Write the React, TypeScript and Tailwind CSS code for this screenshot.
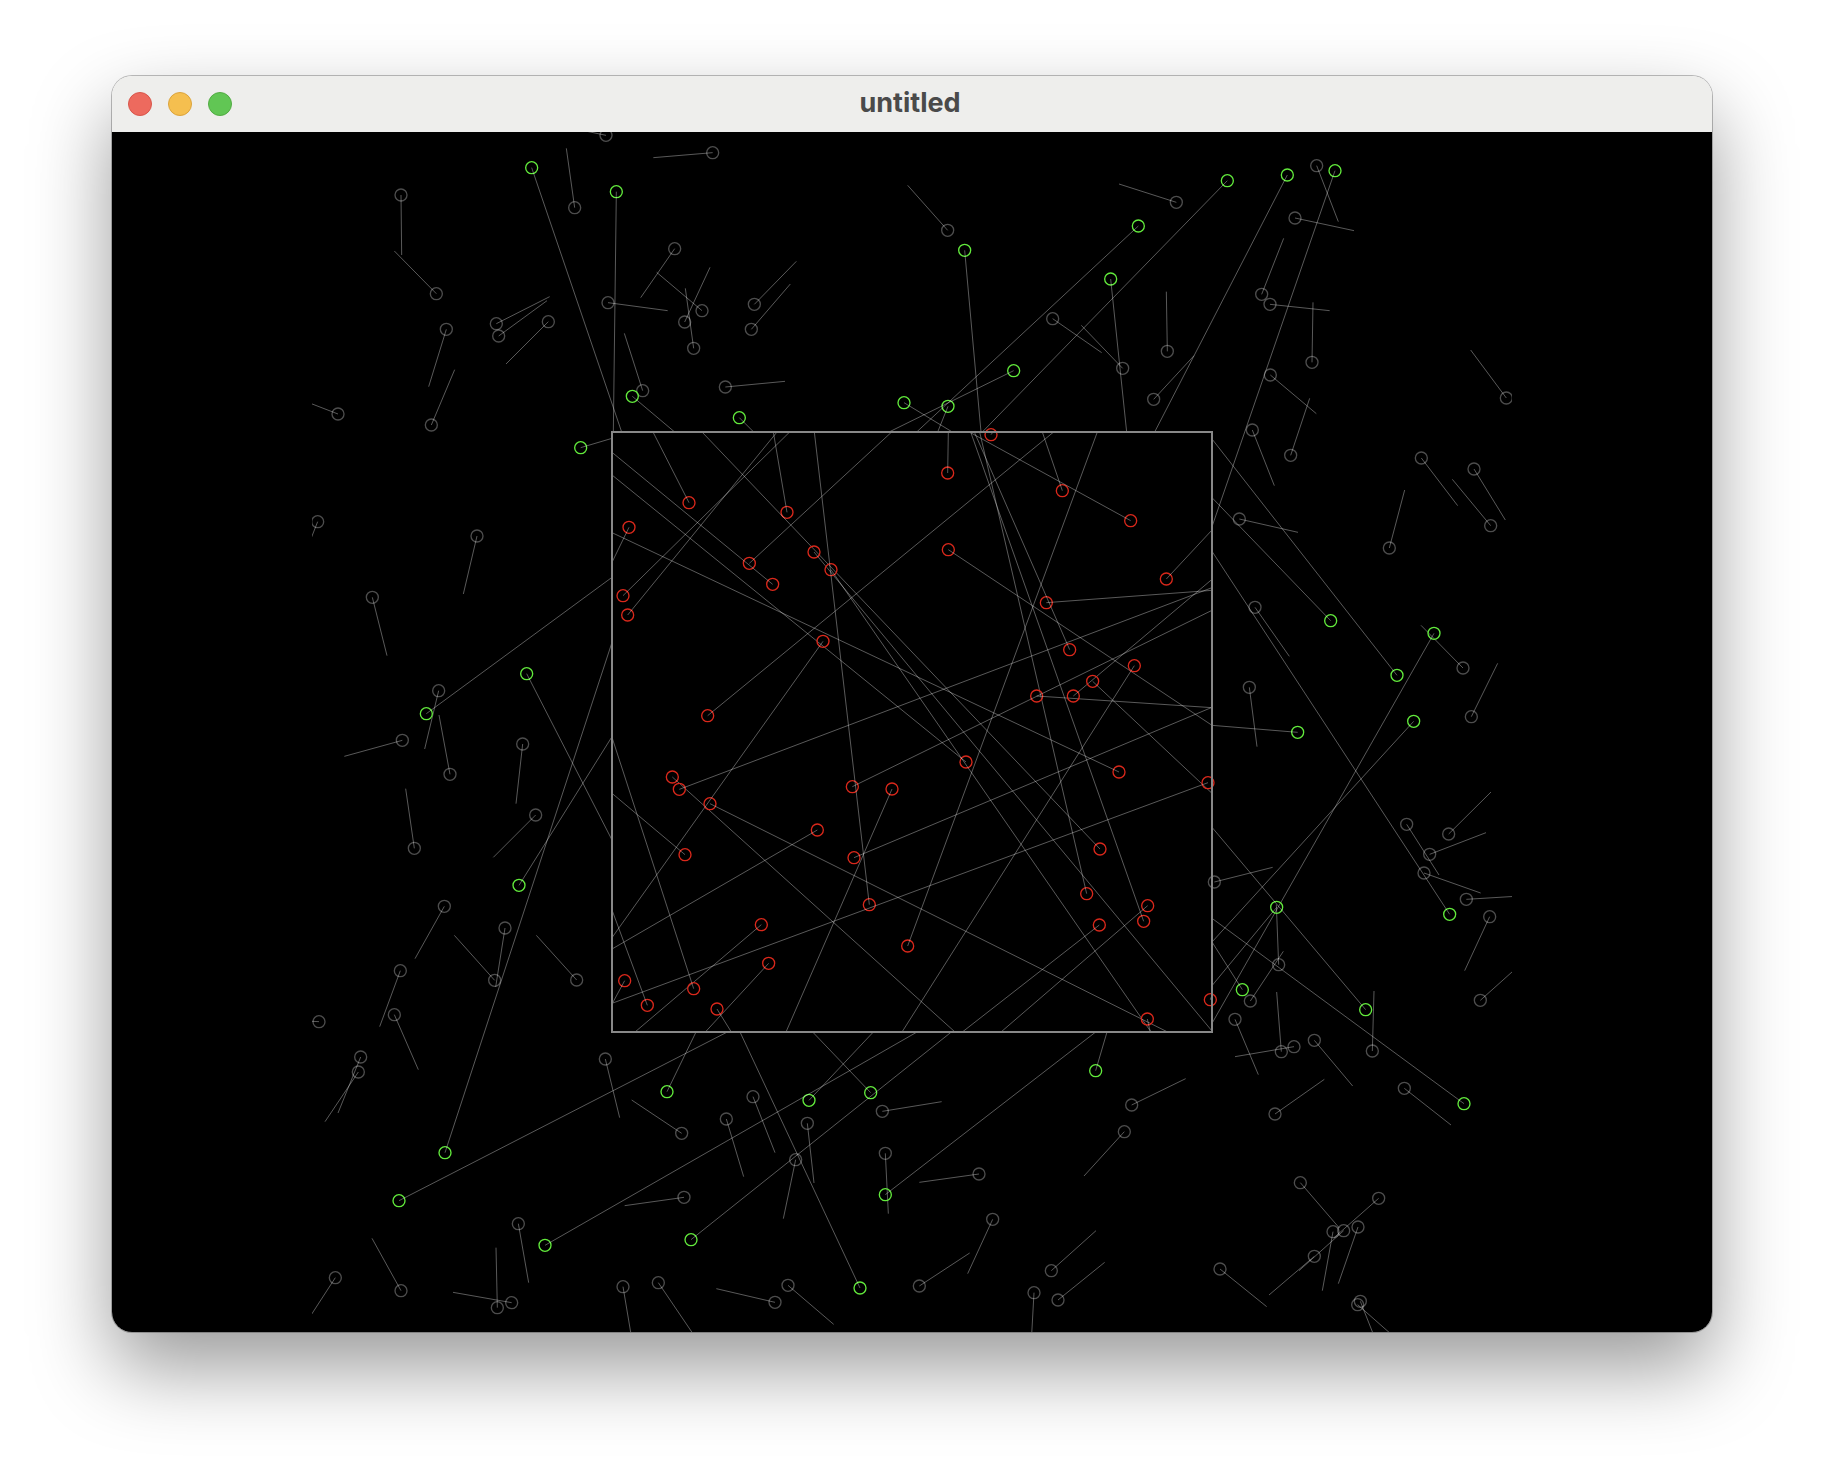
type Ray = [cx: number, cy: number, ex: number, ey: number];

const idle: Ray[] = [
  [882, 10, 706, -27], [1202, 62, 1024, 77], [788, 227, 763, 49], [267, 189, 269, 369],
  [373, 485, 247, 357], [403, 592, 350, 764], [358, 879, 428, 713], [553, 575, 713, 494],
  [560, 612, 705, 506], [709, 569, 582, 696], [78, 846, -90, 781], [17, 1169, -49, 1337],
  [1088, 350, 986, 497], [1170, 536, 1034, 421], [888, 512, 1067, 536], [1118, 570, 1194, 406],
  [1145, 649, 1120, 469], [992, 776, 937, 604], [495, 1212, 454, 1386], [1907, 295, 1787, 160],
  [1327, 517, 1453, 388], [1318, 592, 1435, 456], [1240, 765, 1419, 748], [2222, 560, 2369, 662],
  [2432, 709, 2308, 580], [2593, 211, 2421, 156], [3014, 101, 3079, 269], [2949, 258, 3126, 296],
  [2849, 487, 2915, 319], [2874, 517, 3053, 536], [2566, 658, 2563, 479], [3000, 691, 3003, 511],
  [2525, 802, 2646, 671], [2875, 729, 3013, 845], [2821, 894, 2887, 1061], [2936, 970, 2993, 799],
  [3583, 798, 3476, 654], [3328, 978, 3437, 1121], [3486, 1011, 3580, 1164], [3536, 1181, 3421, 1042],
  [2782, 1161, 2958, 1201], [3232, 1248, 3278, 1074], [2829, 1426, 2932, 1573], [2812, 1666, 2835, 1844],
  [3453, 1608, 3327, 1480], [3478, 1754, 3557, 1594], [3284, 2077, 3381, 2229], [3410, 2106, 3537, 1980],
  [3353, 2167, 3522, 2102], [3336, 2223, 3506, 2283], [3463, 2302, 3643, 2291], [3533, 2354, 3458, 2516],
  [2707, 2250, 2882, 2206], [181, 1396, 225, 1571], [380, 1676, 338, 1851], [271, 1825, 97, 1873],
  [414, 1927, 381, 1749], [632, 1836, 612, 2015], [671, 2049, 544, 2176], [307, 2149, 281, 1970],
  [397, 2323, 309, 2480], [579, 2388, 551, 2565], [548, 2545, 427, 2410], [794, 2544, 673, 2410],
  [265, 2516, 203, 2684], [21, 2669, -150, 2660], [247, 2648, 319, 2813], [146, 2775, 78, 2943],
  [139, 2820, 39, 2969], [880, 2781, 923, 2957], [1109, 3004, 959, 2904], [1116, 3196, 938, 3221],
  [619, 3275, 650, 3452], [70, 3437, -28, 3588], [267, 3476, 180, 3319], [556, 3527, 552, 3347],
  [599, 3512, 423, 3481], [933, 3464, 963, 3642], [1039, 3452, 1140, 3601], [1243, 2961, 1295, 3134],
  [1323, 2894, 1389, 3062], [1486, 2974, 1506, 3153], [1451, 3083, 1414, 3260], [1711, 2938, 1889, 2909],
  [1720, 3064, 1729, 3245], [2001, 3126, 1822, 3151], [2042, 3262, 1967, 3425], [1822, 3462, 1973, 3363],
  [1428, 3460, 1565, 3577], [1389, 3511, 1213, 3470], [2218, 3416, 2352, 3296], [2238, 3504, 2378, 3391],
  [2166, 3482, 2156, 3662], [2437, 2999, 2316, 3132], [2459, 2919, 2621, 2840], [2900, 2498, 2893, 2318],
  [2815, 2607, 2914, 2458], [2769, 2662, 2839, 2828], [2908, 2759, 2894, 2580], [2946, 2744, 2769, 2774],
  [3007, 2725, 3122, 2862], [3181, 2757, 3186, 2577], [3277, 2869, 3417, 2979], [2889, 2946, 3037, 2842],
  [3505, 2605, 3639, 2485], [2965, 3152, 3082, 3288], [3200, 3199, 3065, 3318], [3063, 3299, 3031, 3476],
  [3095, 3296, 2961, 3416], [3138, 3285, 3079, 3455], [3007, 3373, 2871, 3489], [2724, 3411, 2864, 3524],
  [3145, 3508, 3211, 3675], [3137, 3518, 3272, 3637],
];

const outside: Ray[] = [
  [659, 107, 929, 900], [913, 179, 904, 900], [961, 793, 1088, 900], [806, 947, 900, 919],
  [1958, 355, 2007, 900], [1282, 857, 1325, 900], [1776, 812, 1921, 900], [1908, 823, 1877, 900],
  [2105, 716, 1731, 900], [2479, 282, 1814, 900], [2746, 146, 2011, 900], [2396, 441, 2444, 900],
  [2926, 129, 2528, 900], [3069, 116, 2700, 1184], [3056, 1466, 2700, 1097], [3255, 1630, 2700, 921],
  [3366, 1504, 2700, 2674], [3305, 1768, 2700, 2430], [2957, 1801, 2700, 1780], [3413, 2347, 2700, 1258],
  [2894, 2326, 2700, 2561], [3161, 2633, 2700, 2086], [2791, 2573, 2700, 2430], [3456, 2915, 2700, 2359],
  [2351, 2816, 2385, 2700], [1720, 3188, 2351, 2700], [1676, 2882, 1502, 2700], [1491, 2905, 1684, 2700],
  [1644, 3468, 1284, 2700], [1137, 3323, 1918, 2700], [699, 3340, 1815, 2700], [1065, 2879, 1152, 2700],
  [261, 3206, 1246, 2700], [399, 3062, 900, 1531], [343, 1745, 900, 1336], [644, 1625, 900, 2124],
  [621, 2260, 900, 1814],
];

const inside: Ray[] = [
  [1131, 1112, 1023, 900], [951, 1186, 900, 1291], [1425, 1141, 1384, 900], [1907, 1023, 1909, 900],
  [2037, 908, 2043, 900], [2251, 1076, 2191, 900], [2456, 1166, 1972, 900], [933, 1391, 1433, 900],
  [947, 1449, 1395, 900], [1081, 1935, 1929, 2700], [1102, 1972, 2700, 1367], [1119, 2168, 900, 1984],
  [1187, 1751, 2225, 900], [1194, 2015, 2567, 2700], [1312, 1294, 1739, 900], [1382, 1357, 900, 961],
  [1962, 1890, 900, 1029], [2364, 2151, 1170, 900], [1506, 1260, 2700, 2697], [1557, 1313, 2517, 2700],
  [1909, 1253, 2700, 1780], [2203, 1412, 2700, 1375], [2273, 1553, 1987, 900], [2495, 2368, 1976, 900],
  [2324, 2285, 2003, 900], [2174, 1692, 2700, 1727], [2284, 1692, 2700, 1342], [2342, 1648, 2700, 1984],
  [1533, 1528, 900, 2417], [1621, 1964, 2700, 1435], [1740, 1971, 1422, 2700], [1516, 2094, 900, 2451],
  [1626, 2177, 2700, 1726], [1672, 2318, 1507, 900], [1348, 2378, 969, 2700], [2563, 1341, 2700, 1194],
  [2467, 1601, 1770, 2700], [2421, 1920, 900, 1202], [2688, 1952, 900, 2614], [2507, 2321, 2067, 2700],
  [2362, 2379, 1951, 2700], [938, 2546, 900, 2616], [1006, 2620, 900, 2334], [1145, 2570, 900, 1816],
  [1370, 2494, 1180, 2700], [1215, 2631, 1258, 2700], [1787, 2442, 2356, 900], [2695, 2603, 2700, 2590],
  [2506, 2661, 2515, 2700],
];

function Rays({ rays, circle }: { rays: Ray[]; circle: string }) {
  return (
    <g>
      {rays.map(([cx, cy, ex, ey], i) => (
        <g key={i}>
          <circle cx={cx} cy={cy} r={18} strokeWidth={4} className={circle} />
          <line x1={cx} y1={cy} x2={ex} y2={ey} className="stroke-white/35" />
        </g>
      ))}
    </g>
  );
}

function Scene() {
  return (
    <svg
      viewBox="0 0 3600 3600"
      className="block aspect-square w-3/4 overflow-hidden"
      fill="none"
      strokeWidth={3}
      role="img"
      aria-label="Particle rays around a box"
    >
      <Rays rays={idle} circle="stroke-white/30" />
      <Rays rays={outside} circle="stroke-[#62ea3c]" />
      <Rays rays={inside} circle="stroke-[#da281b]" />
      <rect x={900} y={900} width={1800} height={1800} strokeWidth={6} className="stroke-[#888888]" />
    </svg>
  );
}

function TitleBar() {
  return (
    <header className="grid h-14 grid-cols-[1fr_auto_1fr] items-center bg-[#eeeeec] px-4">
      <div className="flex gap-4">
        <button type="button" aria-label="Close" className="size-6 rounded-full border border-[#d8564b] bg-[#ed6a5e]" />
        <button type="button" aria-label="Minimize" className="size-6 rounded-full border border-[#dba33c] bg-[#f5bf4f]" />
        <button type="button" aria-label="Zoom" className="size-6 rounded-full border border-[#52ab43] bg-[#61c654]" />
      </div>
      <h1 className="pr-1 pb-0.5 font-[Inter,sans-serif] text-[27px] leading-8 font-bold text-[#4a4a4a]">untitled</h1>
    </header>
  );
}

export default function App() {
  return (
    <main className="min-h-screen bg-white px-28 pt-19 pb-37">
      <section className="overflow-hidden rounded-[20px] shadow-[0_0_0_1px_rgba(0,0,0,0.25),0_36px_80px_rgba(0,0,0,0.4)]">
        <TitleBar />
        <div className="flex justify-center bg-black">
          <Scene />
        </div>
      </section>
    </main>
  );
}
